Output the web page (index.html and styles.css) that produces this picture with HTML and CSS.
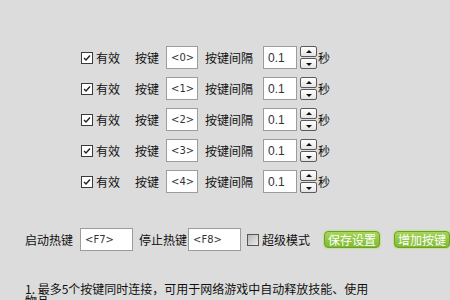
FILE: index.html
```html
<!DOCTYPE html>
<html>
  <head>
    <title>连发设置</title>
    <link rel="stylesheet" href="styles.css">
  </head>
  <body>
    <div class="panel">
      <div class="keys">
        <div class="row">
          <span class="check on"><svg viewBox="0 0 10 10" width="10" height="10"><path d="M2 5 L4 7 L8 2.5" fill="none" stroke="#222" stroke-width="1.4"/></svg></span>
          <span class="valid">有效</span>
          <span class="lbl">按键</span>
          <span class="field key">&lt;0&gt;</span>
          <span class="lbl gap">按键间隔</span>
          <span class="field num">0.1</span>
          <span class="spin"><i class="up"></i><i class="down"></i></span>
          <span class="unit">秒</span>
        </div>
        <div class="row">
          <span class="check on"><svg viewBox="0 0 10 10" width="10" height="10"><path d="M2 5 L4 7 L8 2.5" fill="none" stroke="#222" stroke-width="1.4"/></svg></span>
          <span class="valid">有效</span>
          <span class="lbl">按键</span>
          <span class="field key">&lt;1&gt;</span>
          <span class="lbl gap">按键间隔</span>
          <span class="field num">0.1</span>
          <span class="spin"><i class="up"></i><i class="down"></i></span>
          <span class="unit">秒</span>
        </div>
        <div class="row">
          <span class="check on"><svg viewBox="0 0 10 10" width="10" height="10"><path d="M2 5 L4 7 L8 2.5" fill="none" stroke="#222" stroke-width="1.4"/></svg></span>
          <span class="valid">有效</span>
          <span class="lbl">按键</span>
          <span class="field key">&lt;2&gt;</span>
          <span class="lbl gap">按键间隔</span>
          <span class="field num">0.1</span>
          <span class="spin"><i class="up"></i><i class="down"></i></span>
          <span class="unit">秒</span>
        </div>
        <div class="row">
          <span class="check on"><svg viewBox="0 0 10 10" width="10" height="10"><path d="M2 5 L4 7 L8 2.5" fill="none" stroke="#222" stroke-width="1.4"/></svg></span>
          <span class="valid">有效</span>
          <span class="lbl">按键</span>
          <span class="field key">&lt;3&gt;</span>
          <span class="lbl gap">按键间隔</span>
          <span class="field num">0.1</span>
          <span class="spin"><i class="up"></i><i class="down"></i></span>
          <span class="unit">秒</span>
        </div>
        <div class="row">
          <span class="check on"><svg viewBox="0 0 10 10" width="10" height="10"><path d="M2 5 L4 7 L8 2.5" fill="none" stroke="#222" stroke-width="1.4"/></svg></span>
          <span class="valid">有效</span>
          <span class="lbl">按键</span>
          <span class="field key">&lt;4&gt;</span>
          <span class="lbl gap">按键间隔</span>
          <span class="field num">0.1</span>
          <span class="spin"><i class="up"></i><i class="down"></i></span>
          <span class="unit">秒</span>
        </div>
      </div>

      <div class="hotkeys">
        <span class="lbl">启动热键</span>
        <span class="field hot">&lt;F7&gt;</span>
        <span class="lbl stop">停止热键</span>
        <span class="field hot">&lt;F8&gt;</span>
        <span class="check off"></span>
        <span class="lbl super">超级模式</span>
        <span class="btn">保存设置</span>
        <span class="btn">增加按键</span>
      </div>

      <p class="note">1. 最多5个按键同时连接，可用于网络游戏中自动释放技能、使用物品</p>
    </div>
  </body>
</html>
```

FILE: styles.css
```css
body {
  margin: 0;
  background-color: #dcdcdc;
  font-family: "Noto Sans CJK SC", "Liberation Sans", sans-serif;
  font-size: 12px;
  color: #111;
  overflow: hidden;
}
.panel {
  width: 450px;
  height: 300px;
  overflow: hidden;
}
.keys {
  display: flex;
  flex-direction: column;
  gap: 8px;
  padding: 46px 0 0 81px;
}
.row {
  display: flex;
  align-items: center;
  height: 23px;
}
.check {
  width: 10px;
  height: 10px;
  border: 1px solid #3a3a3a;
  background: #fff;
  display: flex;
  align-items: center;
  justify-content: center;
  flex-shrink: 0;
}
.check.off {
  background: linear-gradient(135deg, #b8b8b8, #ececec);
  border-color: #555;
  margin-left: 6px;
}
.valid {
  margin-left: 3px;
  width: 24px;
}
.lbl {
  line-height: 14px;
  white-space: nowrap;
}
.row .lbl {
  margin-left: 15px;
}
.row .lbl.gap {
  margin-left: 7px;
}
.field {
  box-sizing: border-box;
  height: 23px;
  background: #fff;
  border: 1px solid #9c9c9c;
  font-family: "DejaVu Sans", sans-serif;
  font-size: 10px;
  color: #333;
  padding: 5px 0 0 4px;
}
.key {
  width: 32px;
  margin-left: 7px;
}
.num {
  width: 34px;
  margin-left: 10px;
  font-family: "Liberation Sans", sans-serif;
  font-size: 12px;
  padding-top: 4px;
}
.spin {
  display: flex;
  flex-direction: column;
  gap: 1px;
  margin-left: 3px;
}
.spin i {
  box-sizing: border-box;
  width: 17px;
  height: 11px;
  border: 1px solid #5a5a5a;
  border-radius: 2px;
  background: linear-gradient(#ffffff, #e4e4e4);
  position: relative;
}
.spin i::after {
  content: "";
  position: absolute;
  left: 5px;
  border-left: 3px solid transparent;
  border-right: 3px solid transparent;
}
.spin .up::after {
  top: 3px;
  border-bottom: 3px solid #111;
}
.spin .down::after {
  top: 4px;
  border-top: 3px solid #111;
}
.unit {
  margin-left: 1px;
}
.hotkeys {
  display: flex;
  align-items: center;
  height: 23px;
  margin-top: 35px;
  padding-left: 25px;
}
.hot {
  width: 56px;
  margin-left: 7px;
}
.lbl.stop {
  margin-left: 6px;
  margin-right: -6px;
}
.lbl.super {
  margin-left: 3px;
}
.btn {
  box-sizing: border-box;
  flex-shrink: 0;
  width: 56px;
  height: 17px;
  margin-left: 14px;
  line-height: 15px;
  text-align: center;
  color: #fff;
  font-size: 12px;
  background: linear-gradient(#a6d65a, #7fbb2f);
  border: 1px solid #6f9f28;
  border-radius: 4px;
  box-shadow: 0 0 1px 1px #c4df98;
}
.note {
  margin: 32px 0 0 25px;
  width: 352px;
  line-height: 12px;
  font-size: 12px;
}
```
